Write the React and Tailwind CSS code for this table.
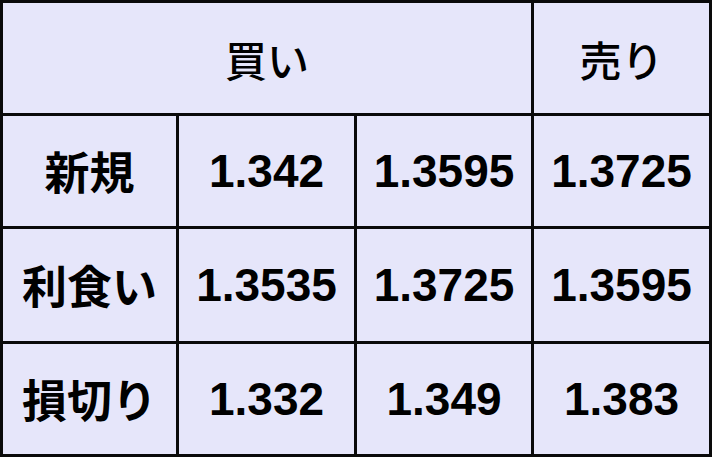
export default function App() {
  const rows = [
    { label: '新規', values: ['1.342', '1.3595', '1.3725'] },
    { label: '利食い', values: ['1.3535', '1.3725', '1.3595'] },
    { label: '損切り', values: ['1.332', '1.349', '1.383'] },
  ];

  const cjk = "font-['Noto_Sans_CJK_JP',sans-serif]";
  const num = "font-['Liberation_Sans',Arial,sans-serif]";

  return (
    <div className="w-[712px] h-[457px] bg-[#0a0a0a] p-[3px]">
      <div className="grid h-full grid-cols-[173px_175px_174px_175px] grid-rows-[110px_110px_112px_110px] gap-[3px]">
        {/* header */}
        <div className={`col-span-3 flex items-center justify-center bg-[#e6e6fa] text-[42px] font-medium text-black ${cjk}`}>
          買い
        </div>
        <div className={`flex items-center justify-center bg-[#e6e6fa] text-[42px] font-medium text-black ${cjk}`}>
          売り
        </div>

        {rows.map((row) => (
          <>
            <div
              key={row.label}
              className={`flex items-center justify-center bg-[#e6e6fa] text-[45px] font-bold text-black ${cjk}`}
            >
              {row.label}
            </div>
            {row.values.map((v, i) => (
              <div
                key={row.label + i}
                className={`flex items-center justify-center bg-[#e6e6fa] text-[46px] font-bold text-black ${num}`}
              >
                {v}
              </div>
            ))}
          </>
        ))}
      </div>
    </div>
  );
}
